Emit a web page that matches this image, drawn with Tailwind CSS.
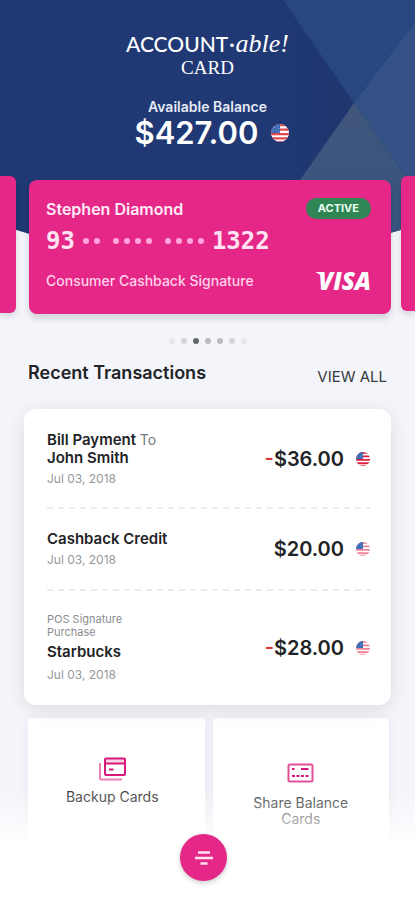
<!DOCTYPE html>
<html lang="en">
<head>
<meta charset="utf-8">
<meta name="viewport" content="width=device-width, initial-scale=1">
<title>ACCOUNT-able! Card</title>
<script src="https://cdn.jsdelivr.net/npm/@tailwindcss/browser@4"></script>
</head>
<body class="bg-[#f3f5fa] font-[Inter,'Liberation_Sans',sans-serif] text-[#222326]">
<svg class="absolute size-0" aria-hidden="true">
  <defs>
    <clipPath id="disc"><circle cx="9" cy="9" r="9"/></clipPath>
    <symbol id="flag" viewBox="0 0 18 18">
      <g clip-path="url(#disc)">
        <path fill="#fff" d="M0 0h18v18H0z"/>
        <path fill="currentColor" d="M0 0h18v2.200H0zM0 4.400h18v2.300H0zM0 8.900h18v2.300H0zM0 13.300h18v2.300H0zM0 17h18v1H0z"/>
        <path fill="#3a69b5" d="M0 0h9v8.900H0z"/>
        <path fill="#8fabd9" d="M3 3h1v1H3zM6 2h1v1H6zM2 6h1v1H2zM5 5.500h1v1H5zM7.300 4h1v1h-1zM7 7h1v1H7z"/>
      </g>
    </symbol>
  </defs>
</svg>
<div class="relative min-h-screen overflow-hidden">
  <svg class="absolute inset-x-0 top-0 h-[290px] w-full" viewBox="0 0 415 290" preserveAspectRatio="none" aria-hidden="true">
    <defs>
      <clipPath id="banner"><path d="M0 225L200 286L415 226V0H0z"/></clipPath>
      <linearGradient id="shade" x1="0" y1="0" x2="1" y2="0">
        <stop offset=".6" stop-color="#203975"/><stop offset="1" stop-color="#1e346a"/>
      </linearGradient>
      <linearGradient id="facet" x1="0" y1="0" x2="0" y2="1">
        <stop offset="0" stop-color="#41567c"/><stop offset=".5" stop-color="#395580"/>
      </linearGradient>
    </defs>
    <g clip-path="url(#banner)">
      <path fill="url(#shade)" d="M0 0h415v290H0z"/>
      <path fill="#28467f" d="M283 0h132v22L354 103z"/>
      <path fill="#345286" d="M415 22L354 103L415 190z"/>
      <path fill="url(#facet)" d="M354 103L300 180L280 290H415V190z"/>
    </g>
  </svg>

  <header class="relative flex flex-col items-center pt-[30px] text-white">
    <h1 class="flex flex-col items-center">
      <span class="flex h-7 items-baseline leading-7"><span class="font-[Lato,sans-serif] text-[21px] font-medium">ACCOUNT</span><span class="font-['Liberation_Serif',serif] text-[22px] font-bold">·</span><span class="font-['Liberation_Serif',serif] text-[26px] italic">able!</span></span>
      <span class="font-['Liberation_Serif',serif] text-[19px] leading-5">CARD</span>
    </h1>
    <p class="mt-[21px] text-[14px] leading-4 font-semibold text-[#e6eaf4]">Available Balance</p>
    <p class="flex items-center gap-3 pl-2 text-[31px] leading-9 font-semibold">$427.00
      <svg class="size-[18px] text-[#e0474f]" role="img" aria-label="US dollars"><use href="#flag"/></svg>
    </p>
  </header>

  <section class="relative mt-[25px] flex items-start" aria-label="Cards">
    <div class="h-[137px] w-4 rounded-r-md bg-[#e52787] shadow-[0_3px_6px_#0002]"></div>
    <article class="mt-[4px] mr-[10px] ml-[13px] flex h-[134px] min-w-0 flex-1 flex-col rounded-lg bg-[#e52787] pt-[18px] pr-5 pl-[17px] text-white shadow-[0_5px_6px_#0002]">
      <div class="flex items-center justify-between">
        <h2 class="text-[16px] leading-5 font-semibold text-[#ffeaf5]">Stephen Diamond</h2>
        <span class="rounded-full bg-[#2f8654] px-3 text-[11px] leading-[21px] font-bold text-[#eafff2]">ACTIVE</span>
      </div>
      <div class="mt-2 flex items-center font-['DejaVu_Sans_Mono',monospace] text-[24px] leading-7 font-bold text-[#ffe3f2]">
        <span>93</span>
        <span class="ml-2 flex gap-[13px]" aria-label="hidden digits">
          <span class="flex gap-[5px]"><i class="size-1.5 rounded-full bg-[#ffa6da]"></i><i class="size-1.5 rounded-full bg-[#ffa6da]"></i></span>
          <span class="flex gap-[5px]"><i class="size-1.5 rounded-full bg-[#ffa6da]"></i><i class="size-1.5 rounded-full bg-[#ffa6da]"></i><i class="size-1.5 rounded-full bg-[#ffa6da]"></i><i class="size-1.5 rounded-full bg-[#ffa6da]"></i></span>
          <span class="flex gap-[5px]"><i class="size-1.5 rounded-full bg-[#ffa6da]"></i><i class="size-1.5 rounded-full bg-[#ffa6da]"></i><i class="size-1.5 rounded-full bg-[#ffa6da]"></i><i class="size-1.5 rounded-full bg-[#ffa6da]"></i></span>
        </span>
        <span class="ml-2">1322</span>
      </div>
      <div class="mt-4 flex items-center justify-between">
        <p class="text-[14px] leading-5 font-medium text-[#ffd3ea]">Consumer Cashback Signature</p>
        <span class="relative font-['Open_Sans',sans-serif] text-[24px] leading-4 font-extrabold italic">VISA<svg class="absolute -top-0.5 -left-0.5 size-2" viewBox="0 0 8 8" fill="#fff" aria-hidden="true"><path d="M0 1h6l1 6Q4.500 3 0 1.600z"/></svg></span>
      </div>
    </article>
    <div class="h-[135px] w-[14px] rounded-l-md bg-[#e52787] shadow-[0_3px_6px_#0002]"></div>
  </section>

  <div class="mt-6 flex justify-center gap-1.5" aria-hidden="true">
    <i class="size-1.5 rounded-full bg-[#e6e8eb]"></i><i class="size-1.5 rounded-full bg-[#d3d5d8]"></i><i class="size-1.5 rounded-full bg-[#66686b]"></i><i class="size-1.5 rounded-full bg-[#b9bbbe]"></i><i class="size-1.5 rounded-full bg-[#b9bbbe]"></i><i class="size-1.5 rounded-full bg-[#d3d5d8]"></i><i class="size-1.5 rounded-full bg-[#e6e8eb]"></i>
  </div>

  <main class="px-6">
    <div class="mt-[17px] flex items-end justify-between px-1">
      <h2 class="text-[18px] leading-6 font-semibold">Recent Transactions</h2>
      <a href="#" class="text-[15px] leading-4 text-[#38393c]">VIEW ALL</a>
    </div>

    <ul class="relative mt-6 rounded-xl bg-white pr-[21px] pl-[23px] shadow-[0_4px_18px_#0000001a]">
      <li class="flex h-[98px] items-center justify-between pt-0.5">
        <div>
          <p class="text-[15px] leading-[18px] font-semibold">Bill Payment <span class="text-[14px] font-normal text-[#77787b]">To</span><br>John Smith</p>
          <p class="mt-1 text-[12px] leading-4 text-[#96979a]">Jul 03, 2018</p>
        </div>
        <p class="flex items-center gap-3 text-[20px] leading-6 font-semibold"><span><span class="text-[#d8353a]">-</span>$36.00</span><svg class="size-3.5 text-[#dc1f3e]" role="img" aria-label="US dollars"><use href="#flag"/></svg></p>
      </li>
      <li><svg class="block h-0.5 w-full" aria-hidden="true"><path d="M0 1H2000" stroke="#ececee" stroke-width="2" stroke-dasharray="6 5"/></svg></li>
      <li class="flex h-20 items-center justify-between">
        <div>
          <p class="text-[15px] leading-[18px] font-semibold">Cashback Credit</p>
          <p class="mt-1 text-[12px] leading-4 text-[#96979a]">Jul 03, 2018</p>
        </div>
        <p class="flex items-center gap-3 text-[20px] leading-6 font-semibold">$20.00<svg class="size-3.5 text-[#ee8297]" role="img" aria-label="US dollars"><use href="#flag"/></svg></p>
      </li>
      <li><svg class="block h-0.5 w-full" aria-hidden="true"><path d="M0 1H2000" stroke="#ececee" stroke-width="2" stroke-dasharray="6 5"/></svg></li>
      <li class="flex h-[114px] items-center justify-between">
        <div>
          <p class="text-[11px] leading-[13px] text-[#8c8d90]">POS Signature<br>Purchase</p>
          <p class="mt-1 text-[15px] leading-[18px] font-semibold">Starbucks</p>
          <p class="mt-1.5 text-[12px] leading-4 text-[#96979a]">Jul 03, 2018</p>
        </div>
        <p class="flex items-center gap-3 text-[20px] leading-6 font-semibold"><span><span class="text-[#d8353a]">-</span>$28.00</span><svg class="size-3.5 text-[#ee8297]" role="img" aria-label="US dollars"><use href="#flag"/></svg></p>
      </li>
    </ul>

    <div class="mt-[13px] grid grid-cols-2 gap-2 pr-[2px] pl-1">
      <a href="#" class="flex h-[181px] flex-col items-center rounded-t-sm bg-white pt-[39px] text-center text-[14px] leading-4 text-[#38393c] shadow-[0_0_12px_#0000000d]">
        <svg class="mr-2 h-6 w-7" viewBox="0 0 28 24" fill="none" aria-hidden="true">
          <path d="M2 6v15a1.500 1.500 0 0 0 1.500 1.500H24" stroke="#ee82b4" stroke-width="2"/>
          <path fill="#fbd3e6" d="M7 2h20v4H7z"/>
          <rect x="7" y="1.500" width="20" height="16.500" rx="1" stroke="#d9187a" stroke-width="2"/>
          <path d="M7 6.500h20M11 12.500h4.500" stroke="#d9187a" stroke-width="2"/>
        </svg>
        <span class="mt-2 pr-2">Backup Cards</span>
      </a>
      <a href="#" class="flex h-[181px] flex-col items-center rounded-t-sm bg-white px-8 pt-[45px] text-center text-[14px] leading-4 text-[#38393c] shadow-[0_0_12px_#0000000d]">
        <svg class="h-5 w-[27px]" viewBox="0 0 27 20" fill="none" stroke="#d9187a" aria-hidden="true">
          <rect x="1.500" y="1.500" width="24" height="17" rx="1.500" stroke="#e34f97" stroke-width="2"/>
          <path d="M5 6h2.500M14 6h7.500M5 13h3M9.500 13h3M14 13h3M18.500 13h3" stroke-width="2"/>
        </svg>
        <span class="mt-3">Share Balance Cards</span>
      </a>
    </div>
  </main>

  <div class="pointer-events-none absolute inset-x-0 bottom-0 h-[110px] bg-linear-to-b from-white/0 to-white to-50%"></div>
  <nav class="absolute inset-x-0 bottom-[19px] flex justify-center pr-2">
    <button type="button" aria-label="Menu" class="flex size-[47px] items-center justify-center rounded-full bg-[#e52787] shadow-[0_2px_5px_#0003]">
      <svg class="h-4 w-5" viewBox="0 0 20 16" stroke="#ffe3f2" stroke-width="2.400" aria-hidden="true"><path d="M4 2.500h12M1 8h18M6.500 13.500h7"/></svg>
    </button>
  </nav>
</div>
</body>
</html>
